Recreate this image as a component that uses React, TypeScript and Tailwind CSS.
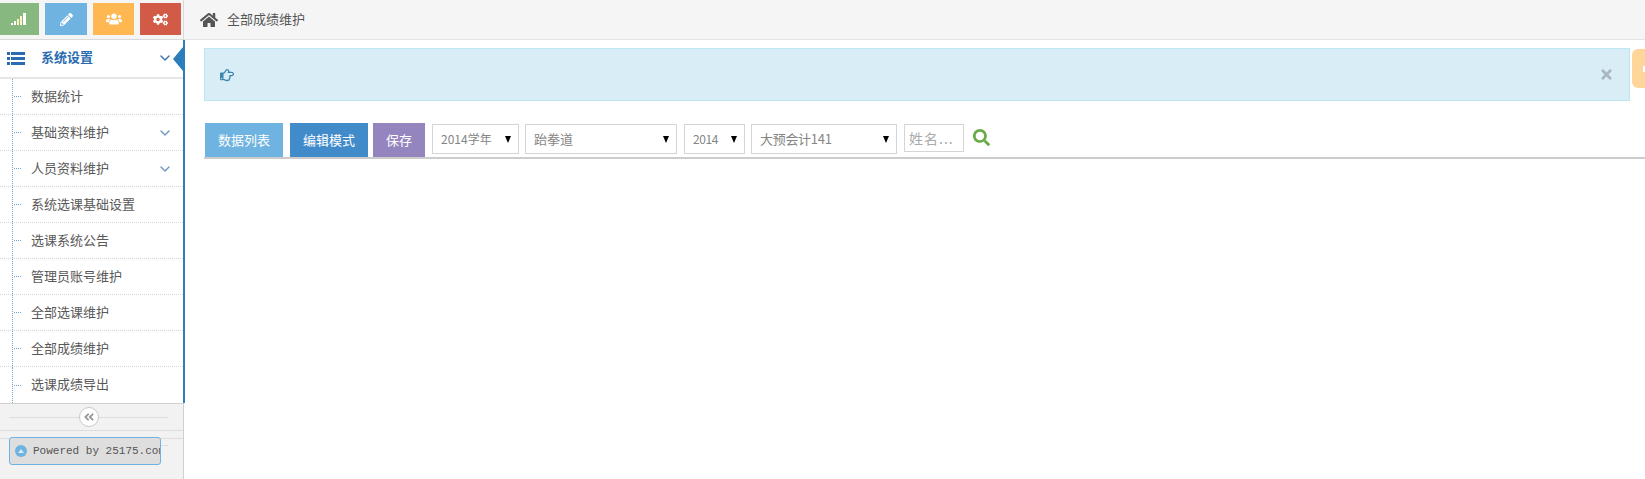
import { ChevronDown } from 'lucide-react';
import {
  FaAngleDoubleLeft,
  FaCogs,
  FaHome,
  FaPencilAlt,
  FaRegHandPointRight,
  FaSearch,
  FaTimes,
  FaUsers,
} from 'react-icons/fa';

const MENU = [
  { label: '数据统计' },
  { label: '基础资料维护', sub: true },
  { label: '人员资料维护', sub: true },
  { label: '系统选课基础设置' },
  { label: '选课系统公告' },
  { label: '管理员账号维护' },
  { label: '全部选课维护' },
  { label: '全部成绩维护' },
  { label: '选课成绩导出' },
];

function Arrow() {
  return <span className="h-0 w-0 border-x-[3.5px] border-t-[7px] border-x-transparent border-t-black" />;
}

function SignalIcon() {
  return (
    <svg width="15" height="12" viewBox="0 0 15 12" fill="#fff">
      <rect x="0" y="10" width="2" height="2" />
      <rect x="3" y="8" width="2" height="4" />
      <rect x="6" y="6" width="2" height="6" fill="#fdf3c8" />
      <rect x="9" y="3" width="2" height="9" fill="#fdf3c8" />
      <rect x="12" y="0" width="3" height="12" />
    </svg>
  );
}

function ListIcon() {
  return (
    <svg width="18" height="13" viewBox="0 0 18 13" fill="#2b6cb0">
      <rect x="0" y="0" width="3" height="3" />
      <rect x="4" y="0" width="14" height="3" />
      <rect x="0" y="5" width="3" height="3" />
      <rect x="4" y="5" width="14" height="3" />
      <rect x="0" y="10" width="3" height="3" />
      <rect x="4" y="10" width="14" height="3" />
    </svg>
  );
}

function Select({ label, className }: { label: string; className: string }) {
  return (
    <div className={`flex h-[30px] items-center justify-between border border-[#d5d5d5] bg-white pl-[8px] pr-[7px] text-[#858585] ${className}`}>
      <span>{label}</span>
      <Arrow />
    </div>
  );
}

function Sidebar() {
  return (
    <aside className="flex w-[185px] shrink-0 flex-col">
      {/* 快捷按钮 */}
      <div className="flex h-[40px] w-[184px] gap-[6px] overflow-hidden border-b border-r border-[#d9d9d9] bg-[#f5f5f5] pt-[3px]">
        <div className="-ml-[3px] flex h-[32px] w-[42px] items-center justify-center bg-[#87b87f]"><SignalIcon /></div>
        <div className="flex h-[32px] w-[42px] items-center justify-center bg-[#6fb3e0] text-[13px] text-white"><FaPencilAlt /></div>
        <div className="flex h-[32px] w-[41px] items-center justify-center bg-[#ffb752] text-[16px] text-white"><FaUsers /></div>
        <div className="flex h-[32px] w-[41px] items-center justify-center bg-[#d15b47] text-[15px] text-white"><FaCogs /></div>
      </div>

      <div className="border-r-[2px] border-[#2b7dbc] bg-white">
        {/* 当前菜单 */}
        <div className="flex h-[39px] items-center border-b-2 border-[#e5e5e5] pl-[7px] pr-[3px]">
          <ListIcon />
          <span className="mb-[4px] ml-[16px] text-[13px] font-bold text-[#2b6cb0]">系统设置</span>
          <ChevronDown size={16} strokeWidth={2} className="mb-[2px] ml-auto text-[#3a6fb0]" />
          <span className="-mr-[3px] h-0 w-0 border-y-[12px] border-r-[10px] border-y-transparent border-r-[#2b7dbc]" />
        </div>
        {MENU.map((item) => (
          <div key={item.label} className="flex h-[36px] items-stretch border-b border-dotted border-[#d5d5d5] pr-[10px] text-[13px] text-[#585858] last:border-b-0">
            <div className="ml-[12px] flex w-[19px] items-center border-l border-dotted border-[#6fa3d0]">
              <span className="ml-[1px] w-[7px] border-t border-dotted border-[#6fa3d0]" />
            </div>
            <span className="mb-[2px] self-center">{item.label}</span>
            {item.sub && <ChevronDown size={16} strokeWidth={2} className="ml-auto self-center text-[#6f94bf]" />}
          </div>
        ))}
      </div>

      {/* 折叠按钮 + 底部 */}
      <div className="w-[184px] flex-1 border-r border-t border-[#d0d0d0] bg-[#f2f2f2]">
        <div className="flex h-[27px] items-center border-b border-[#dddddd] pl-[9px] pr-[15px]">
          <span className="flex-1 border-t border-[#dddddd]" />
          <span className="flex h-[20px] w-[20px] items-center justify-center rounded-full border border-[#c8c8c8] bg-white text-[12px] text-[#9a9a9a]">
            <FaAngleDoubleLeft />
          </span>
          <span className="flex-1 border-t border-[#dddddd]" />
        </div>
        <div className="mt-[7px] flex items-start border-t border-[#dddddd]">
          <div className="-mt-[2px] ml-[9px] flex h-[28px] w-[152px] items-center overflow-hidden whitespace-nowrap rounded-[3px] border border-[#6fb3e0] bg-[#dedede] pl-[5px] font-['Liberation_Mono',monospace] text-[11px] text-[#555]">
            <span className="mr-[6px] flex h-[12px] w-[12px] shrink-0 items-center justify-center rounded-full bg-[#6fb3e0]">
              <span className="h-0 w-0 border-x-[3px] border-b-[4px] border-x-transparent border-b-[#dbe9f5]" />
            </span>
            Powered by 25175.com
          </div>
          <span className="mt-[6px] w-[7px] border-t border-[#dddddd]" />
        </div>
      </div>
    </aside>
  );
}

export default function App() {
  return (
    <div className="flex h-[479px] w-[1645px] overflow-hidden bg-white font-['Noto_Sans_CJK_SC','Noto_Sans',sans-serif]">
      <Sidebar />
      <main className="min-w-0 flex-1">
        {/* 面包屑 */}
        <div className="-ml-px flex h-[40px] items-center border-b border-[#e5e5e5] bg-[#f5f5f5] pl-[16px] text-[13px] text-[#555]">
          <FaHome className="text-[18px] text-[#555]" />
          <span className="mb-[2px] ml-[9px]">全部成绩维护</span>
        </div>

        {/* 提示 */}
        <div className="mt-[8px] flex items-start gap-[2px] pl-[19px]">
          <div className="flex h-[53px] w-[1426px] shrink-0 items-center justify-between border border-[#bce8f1] bg-[#d9edf7] pl-[15px] pr-[15px]">
            <FaRegHandPointRight className="text-[14px] text-[#3a87ad]" />
            <FaTimes className="text-[15px] text-[#a9b8c0]" />
          </div>
          <div className="mt-px flex h-[39px] w-[40px] shrink-0 items-center rounded-[6px] bg-[#ffd699] pl-[11px]">
            <span className="h-[6px] w-[4px] bg-white" />
          </div>
        </div>

        {/* 工具栏 */}
        <div className="ml-[19px] mt-[22px] flex h-[36px] items-start border-b-[2px] border-[#cccccc] pl-px">
          <button className="h-[34px] w-[78px] bg-[#6fb3e0] text-[13px] text-white">数据列表</button>
          <button className="ml-[7px] h-[34px] w-[78px] bg-[#428bca] text-[13px] text-white">编辑模式</button>
          <button className="ml-[5px] h-[34px] w-[52px] bg-[#9585bf] text-[13px] text-white">保存</button>
          <Select label="2014学年" className="ml-[7px] mt-px w-[87px] text-[12px]" />
          <Select label="跆拳道" className="ml-[6px] mt-px w-[152px] text-[13px]" />
          <Select label="2014" className="ml-[7px] mt-px w-[61px] text-[12px] tracking-[-0.4px]" />
          <Select label="大预会计141" className="ml-[6px] mt-px w-[146px] text-[13px] tracking-[-0.3px]" />
          <input
            placeholder="姓名..."
            className="ml-[7px] mt-px h-[28px] w-[60px] border border-[#d5d5d5] pl-[4px] text-[14px] tracking-[1px] placeholder:text-[#aaaaaa]"
          />
          <FaSearch className="ml-[9px] mt-[6px] text-[17px] text-[#69aa46]" />
        </div>
      </main>
    </div>
  );
}
